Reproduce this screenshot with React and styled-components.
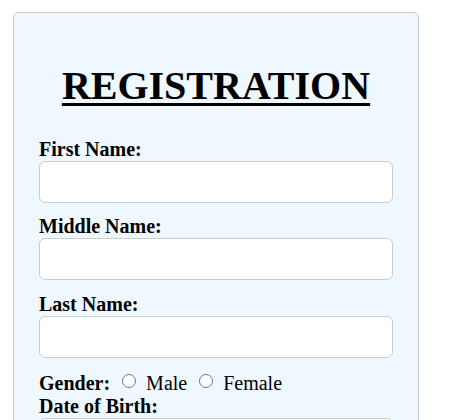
import React from 'react'
import styled, { createGlobalStyle } from 'styled-components'

// 페이지 기본 스타일
const GlobalStyle = createGlobalStyle`
  body {
    margin: 0;
    background: #ffffff;
    font-family: "Liberation Serif", "Times New Roman", serif;
    font-size: 20px;
    color: #000000;
  }
`;

const Page = styled.div`
  padding: 12px 0 40px 13px;
`;

// 등록 카드
const Card = styled.form`
  box-sizing: border-box;
  width: 406px;
  padding: 25px;
  background: #f0f8ff;
  border: 1px solid #cccccc;
  border-radius: 5px;
`;

const Title = styled.h1`
  margin: 24px 0 28.5px;
  text-align: center;
  font-size: 40px;
  font-weight: bold;
  line-height: normal;
  text-decoration: underline;
  text-decoration-thickness: 3px;
  text-underline-offset: 4px;
`;

const Label = styled.label`
  display: block;
  font-size: 20px;
  font-weight: bold;
  line-height: 23px;
`;

const InlineLabel = styled.span`
  font-weight: bold;
`;

const Input = styled.input`
  display: block;
  box-sizing: border-box;
  width: 100%;
  height: 42px;
  margin: 0 0 12.5px;
  padding: 0 12px;
  background: #ffffff;
  border: 1px solid #cccccc;
  border-radius: 6px;
  font-family: inherit;
  font-size: 18px;
  outline: none;
`;

const GenderRow = styled.div`
  font-size: 20px;
  line-height: 23px;
`;

const Radio = styled.input`
  appearance: none;
  display: inline-block;
  box-sizing: border-box;
  width: 14.5px;
  height: 14.5px;
  margin: 3.5px 5px 2px 6.5px;
  border: 1px solid #767676;
  border-radius: 50%;
  background: #ffffff;
  vertical-align: baseline;
`;

const SubmitButton = styled.button`
  display: block;
  width: 100%;
  height: 42px;
  border: none;
  border-radius: 6px;
  background: #4a90d9;
  color: #ffffff;
  font-family: inherit;
  font-size: 20px;
  font-weight: bold;
`;

const fields = [
  { id: 'first', label: 'First Name:' },
  { id: 'middle', label: 'Middle Name:' },
  { id: 'last', label: 'Last Name:' },
];

const App = () => {
  return (
    <Page>
      <GlobalStyle />
      <Card onSubmit={(e) => e.preventDefault()}>
        <Title>REGISTRATION</Title>

        {fields.map((f) => (
          <div key={f.id}>
            <Label htmlFor={f.id}>{f.label}</Label>
            <Input id={f.id} type='text' />
          </div>
        ))}

        <GenderRow>
          <InlineLabel>Gender:</InlineLabel> <Radio type='radio' name='gender' value='male' /> Male <Radio type='radio' name='gender' value='female' /> Female
        </GenderRow>

        <Label htmlFor='dob'>Date of Birth:</Label>
        <Input id='dob' type='text' />

        <Label htmlFor='email'>Email:</Label>
        <Input id='email' type='text' />

        <SubmitButton type='submit'>Register</SubmitButton>
      </Card>
    </Page>
  )
}

export default App
